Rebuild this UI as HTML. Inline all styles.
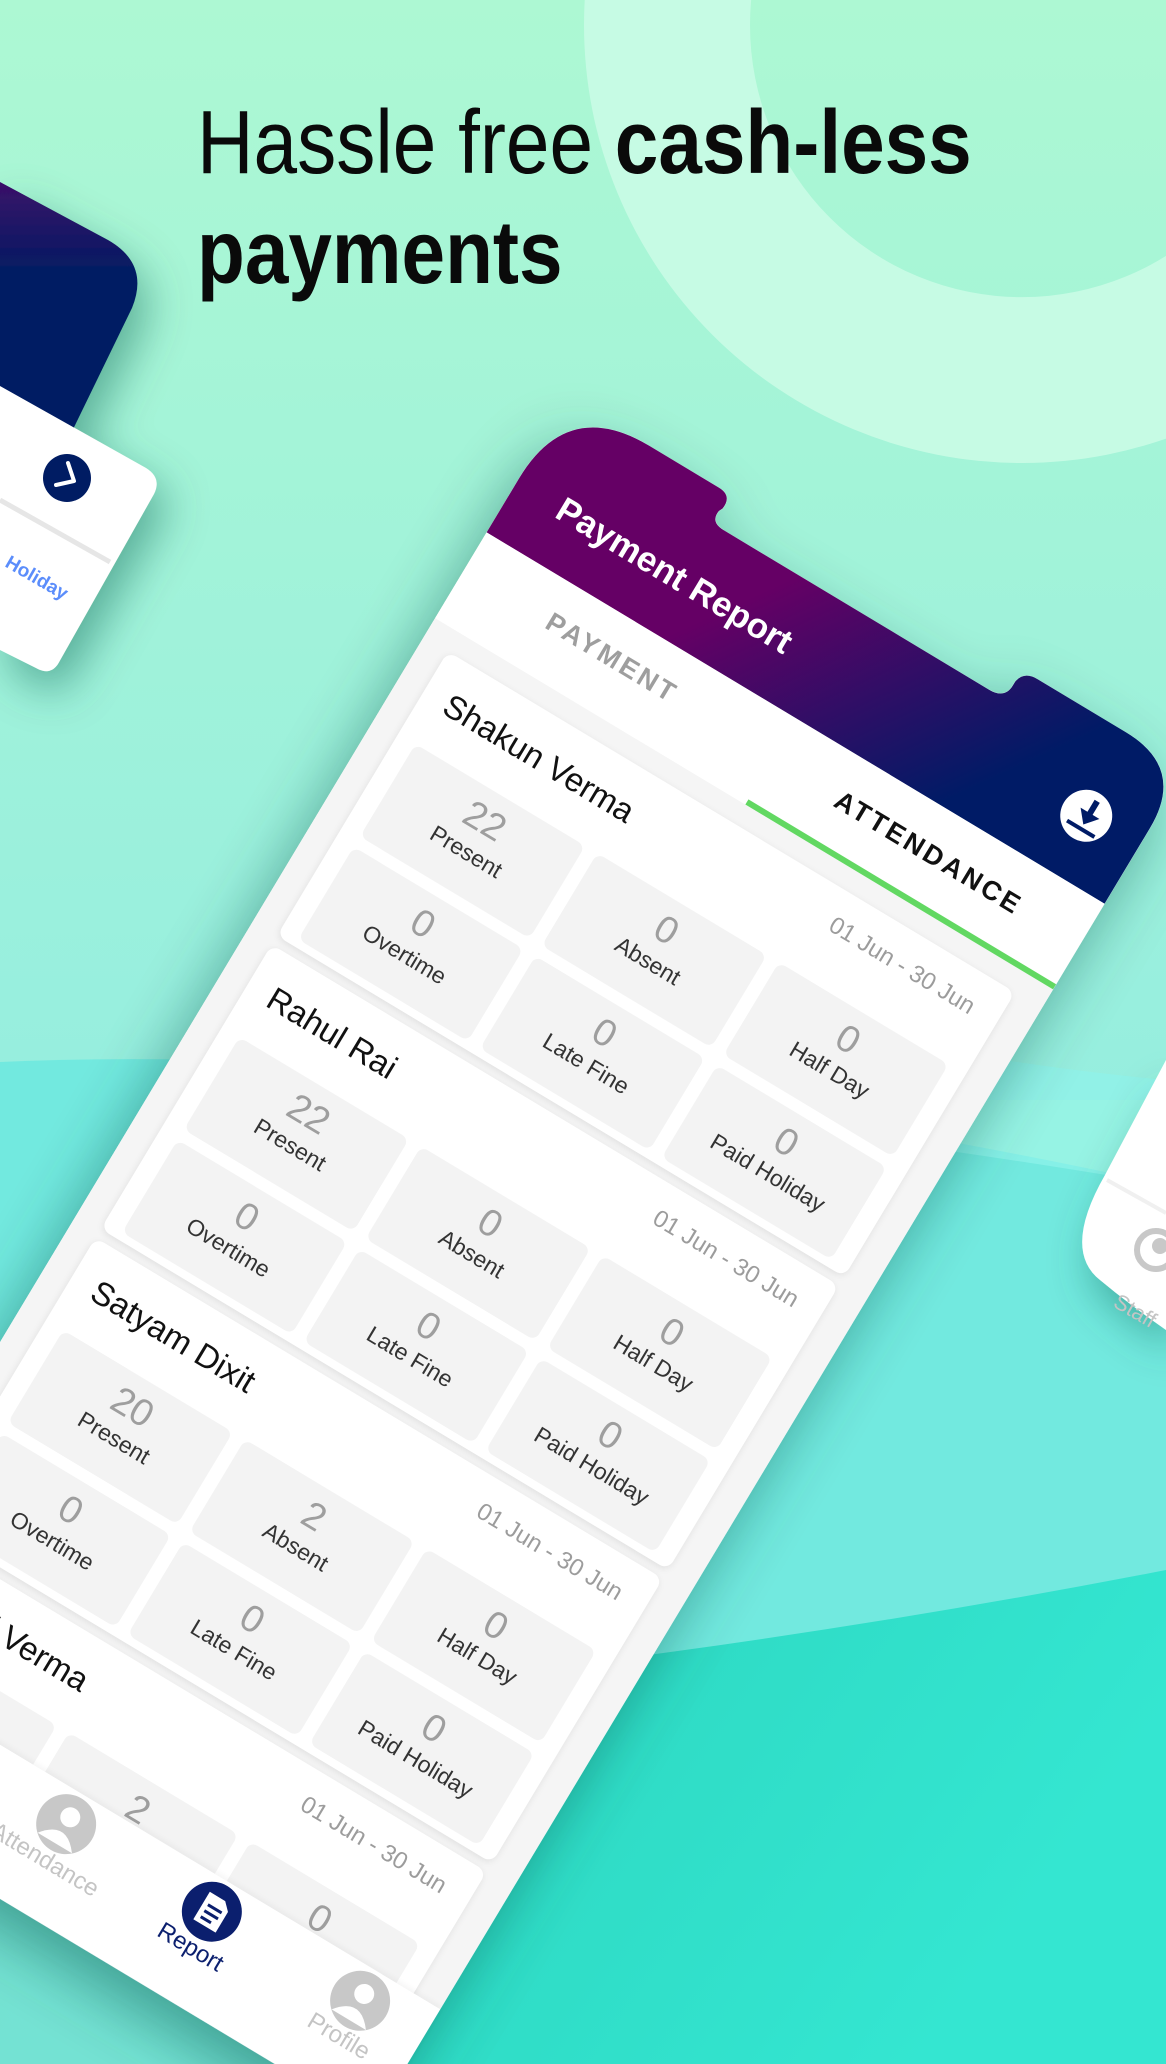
<!DOCTYPE html>
<html><head><meta charset="utf-8"><style>
*{margin:0;padding:0;box-sizing:border-box}
html,body{width:1166px;height:2064px;overflow:hidden}
body{position:relative;font-family:"Liberation Sans",sans-serif;background:#a8f4d6}
#root{position:absolute;left:0;top:0;width:1166px;height:2064px;overflow:hidden}
.abs{position:absolute}
#head{left:197px;top:88px;font-size:90px;line-height:110px;color:#0a0a0a;transform:scaleX(0.87);transform-origin:0 0;white-space:nowrap}
#phone{left:0;top:0;width:721px;height:1580px;transform-origin:0 0;transform:matrix(0.857,0.515,-0.515,0.857,568,397)}
.card{position:absolute;left:28px;width:662px;height:332px;background:#fff;border-radius:10px;box-shadow:0 2px 8px rgba(0,0,0,.09)}
.nm{position:absolute;left:25px;top:24px;font-size:33px;line-height:42px;color:#111}
.dt{position:absolute;right:28px;top:20px;font-size:24px;line-height:32px;color:#9c9c9c}
.cell{position:absolute;width:198px;height:108px;background:#f3f3f3;border-radius:8px;text-align:center}
.cell b{display:block;font-weight:normal;font-size:38px;line-height:42px;color:#9e9e9e;margin-top:10px}
.cell i{display:block;font-style:normal;font-size:23px;line-height:28px;color:#333}
.nav{position:absolute;text-align:center;width:160px;font-size:24px;color:#c4c4c4}
</style></head><body><div id="root">
<svg class="abs" style="left:0;top:0" width="1166" height="2064">
<defs>
<linearGradient id="bg" x1="0" y1="0" x2="0" y2="1"><stop offset="0" stop-color="#adf8d3"/><stop offset="1" stop-color="#96eedf"/></linearGradient>
<linearGradient id="low" x1="0" y1="0" x2="1" y2="0.3"><stop offset="0" stop-color="#2cc6b4"/><stop offset="0.6" stop-color="#2fdcc6"/><stop offset="1" stop-color="#34e6d1"/></linearGradient>
<linearGradient id="lp" x1="0" y1="0" x2="0" y2="1"><stop offset="0" stop-color="#3a1068"/><stop offset="0.35" stop-color="#001c63"/><stop offset="1" stop-color="#001c63"/></linearGradient>
<filter id="sh" x="-50%" y="-50%" width="200%" height="200%"><feDropShadow dx="10" dy="20" stdDeviation="22" flood-color="#0a5a4a" flood-opacity="0.45"/></filter>
</defs>
<rect width="1166" height="1100" fill="url(#bg)"/>
<path d="M1022,25 m-438,0 a438,438 0 1 0 876,0 a438,438 0 1 0 -876,0 Z M1022,25 m-272,0 a272,272 0 1 1 544,0 a272,272 0 1 1 -544,0 Z" fill="#c6fbe4" fill-rule="evenodd"/>
<path d="M0,1062 Q500,1040 1166,1185 L1166,2064 L0,2064 Z" fill="#72e9df"/>
<path d="M700,1000 Q950,1060 1166,1080 L1166,1185 Q900,1140 700,1120 Z" fill="#8ef2ea" opacity="0.7"/>
<path d="M0,1720 Q600,1680 1166,1570 L1166,2064 L0,2064 Z" fill="url(#low)"/>
<ellipse cx="30" cy="2120" rx="280" ry="240" fill="#86e6d8" opacity="0.8"/>
<g filter="url(#sh)">
<path d="M0,182 L108,240 Q150,264 132,308 L62,452 L0,452 Z" fill="url(#lp)"/>
<path d="M0,386 L146,468 Q162,478 154,494 L58,664 Q50,676 36,668 L0,650 Z" fill="#fff"/>
</g>
<line x1="0" y1="500" x2="110" y2="562" stroke="#e6e6e6" stroke-width="5"/>
<circle cx="67" cy="478" r="24" fill="#001c63"/>
<path d="M68,463 L74,481 L56,485" stroke="#fff" stroke-width="4" fill="none" stroke-linecap="round" stroke-linejoin="round"/>
<text x="4" y="566" transform="rotate(30 4 566)" font-family="Liberation Sans" font-weight="bold" font-size="19" fill="#5b8dfb">Holiday</text>
<g filter="url(#sh)">
<path d="M1166,1060 L1105,1175 Q1062,1250 1100,1280 Q1130,1305 1166,1330 Z" fill="#fff"/>
</g>
<path d="M1107,1180 L1166,1213" stroke="#f0f0f0" stroke-width="4"/>
<circle cx="1156" cy="1250" r="19" fill="none" stroke="#c8c8c8" stroke-width="6"/>
<circle cx="1160" cy="1246" r="8" fill="#c8c8c8"/>
<text x="1112" y="1306" transform="rotate(30 1112 1306)" font-family="Liberation Sans" font-size="22" fill="#c4c4c4">Staff</text>
</svg>

<div id="head" class="abs">Hassle free <b>cash-less</b><br><b>payments</b></div>

<div id="phone" class="abs">
<svg class="abs" style="left:0;top:0;overflow:visible" width="721" height="1580">
<defs>
<linearGradient id="hg" gradientUnits="userSpaceOnUse" x1="300" y1="20" x2="520" y2="170"><stop offset="0" stop-color="#650065"/><stop offset="1" stop-color="#001b66"/></linearGradient>
<clipPath id="hc"><rect x="-10" y="-10" width="741" height="168"/></clipPath>
<filter id="ps" x="-20%" y="-20%" width="140%" height="140%"><feDropShadow dx="0" dy="25" stdDeviation="30" flood-color="#0b4d44" flood-opacity="0.45"/></filter>
</defs>
<path d="M0,95 Q0,0 95,0 L176,0 Q192,0 190,16 L188,20 Q186,34 202,34 L512,34 Q530,34 530,18 L530,14 Q532,0 548,0 L651,0 Q721,0 721,70 L721,1520 Q721,1580 661,1580 L60,1580 Q0,1580 0,1520 Z" fill="#fff" filter="url(#ps)"/>
<path d="M0,95 Q0,0 95,0 L176,0 Q192,0 190,16 L188,20 Q186,34 202,34 L512,34 Q530,34 530,18 L530,14 Q532,0 548,0 L651,0 Q721,0 721,70 L721,1520 Q721,1580 661,1580 L60,1580 Q0,1580 0,1520 Z" fill="url(#hg)" clip-path="url(#hc)"/>
<circle cx="660" cy="92" r="26" fill="#fff"/>
<path d="M662,74 L662,94" stroke="#001b66" stroke-width="6"/>
<path d="M651,88 L673,88 L662,101 Z" fill="#001b66"/>
<path d="M646,106 L678,106" stroke="#001b66" stroke-width="4"/>
</svg>
<div class="abs" style="left:49px;top:78px;font-size:35px;font-weight:bold;color:#fff;line-height:42px;white-space:nowrap">Payment Report</div>
<div class="abs" style="left:0;top:258px;width:721px;height:1190px;background:#f5f5f5;overflow:hidden">
 <div class="card" style="top:22px"><div class="nm">Shakun Verma</div><div class="dt">01 Jun - 30 Jun</div>
  <div class="cell" style="left:20px;top:96px"><b>22</b><i>Present</i></div><div class="cell" style="left:232px;top:96px"><b>0</b><i>Absent</i></div><div class="cell" style="left:444px;top:96px"><b>0</b><i>Half Day</i></div>
  <div class="cell" style="left:20px;top:216px"><b>0</b><i>Overtime</i></div><div class="cell" style="left:232px;top:216px"><b>0</b><i>Late Fine</i></div><div class="cell" style="left:444px;top:216px"><b>0</b><i>Paid Holiday</i></div></div>
 <div class="card" style="top:364px"><div class="nm">Rahul Rai</div><div class="dt">01 Jun - 30 Jun</div>
  <div class="cell" style="left:20px;top:96px"><b>22</b><i>Present</i></div><div class="cell" style="left:232px;top:96px"><b>0</b><i>Absent</i></div><div class="cell" style="left:444px;top:96px"><b>0</b><i>Half Day</i></div>
  <div class="cell" style="left:20px;top:216px"><b>0</b><i>Overtime</i></div><div class="cell" style="left:232px;top:216px"><b>0</b><i>Late Fine</i></div><div class="cell" style="left:444px;top:216px"><b>0</b><i>Paid Holiday</i></div></div>
 <div class="card" style="top:706px"><div class="nm">Satyam Dixit</div><div class="dt">01 Jun - 30 Jun</div>
  <div class="cell" style="left:20px;top:96px"><b>20</b><i>Present</i></div><div class="cell" style="left:232px;top:96px"><b>2</b><i>Absent</i></div><div class="cell" style="left:444px;top:96px"><b>0</b><i>Half Day</i></div>
  <div class="cell" style="left:20px;top:216px"><b>0</b><i>Overtime</i></div><div class="cell" style="left:232px;top:216px"><b>0</b><i>Late Fine</i></div><div class="cell" style="left:444px;top:216px"><b>0</b><i>Paid Holiday</i></div></div>
 <div class="card" style="top:1048px"><div class="nm">Shakti Verma</div><div class="dt">01 Jun - 30 Jun</div>
  <div class="cell" style="left:20px;top:96px"><b>20</b><i>Present</i></div><div class="cell" style="left:232px;top:96px"><b>2</b><i>Absent</i></div><div class="cell" style="left:444px;top:96px"><b>0</b><i>Half Day</i></div></div>
</div>
<div class="abs" style="left:0;top:158px;width:721px;height:100px;background:#fff"></div>
<div class="abs" style="left:72px;top:186px;width:200px;text-align:center;font-size:27px;font-weight:bold;letter-spacing:3px;color:#9e9e9e">PAYMENT</div>
<div class="abs" style="left:424px;top:190px;width:240px;text-align:center;font-size:27px;font-weight:bold;letter-spacing:3px;color:#111">ATTENDANCE</div>
<div class="abs" style="left:362px;top:252px;width:359px;height:6px;background:#62d862"></div>
<div class="abs" style="left:0;top:1448px;width:721px;height:132px;background:#fff;border-radius:0 0 60px 60px;box-shadow:0 -3px 6px rgba(0,0,0,.04)"></div>
<svg class="abs" style="left:0;top:1448px" width="721" height="80">
 <g fill="#c8c8c8"><circle cx="132" cy="34" r="30"/><circle cx="305" cy="34" r="30"/><circle cx="648" cy="34" r="30"/></g>
 <g fill="#fff"><circle cx="132" cy="26" r="10"/><path d="M112,56 Q132,30 152,56 Z"/><circle cx="305" cy="26" r="10"/><path d="M285,56 Q305,30 325,56 Z"/><circle cx="648" cy="26" r="10"/><path d="M628,56 Q648,30 668,56 Z"/></g>
 <circle cx="475" cy="34" r="30" fill="#0b1f6e"/>
 <path d="M463,18 L481,18 L489,26 L489,50 L463,50 Z" fill="#fff"/>
 <g stroke="#0b1f6e" stroke-width="3"><path d="M468,30 L484,30 M468,37 L484,37 M468,44 L480,44"/></g>
</svg>
<div class="nav" style="left:52px;top:1510px">Home</div>
<div class="nav" style="left:225px;top:1510px">Attendance</div>
<div class="nav" style="left:395px;top:1510px;color:#0b1f6e">Report</div>
<div class="nav" style="left:568px;top:1510px">Profile</div>
</div>
</div></body></html>
